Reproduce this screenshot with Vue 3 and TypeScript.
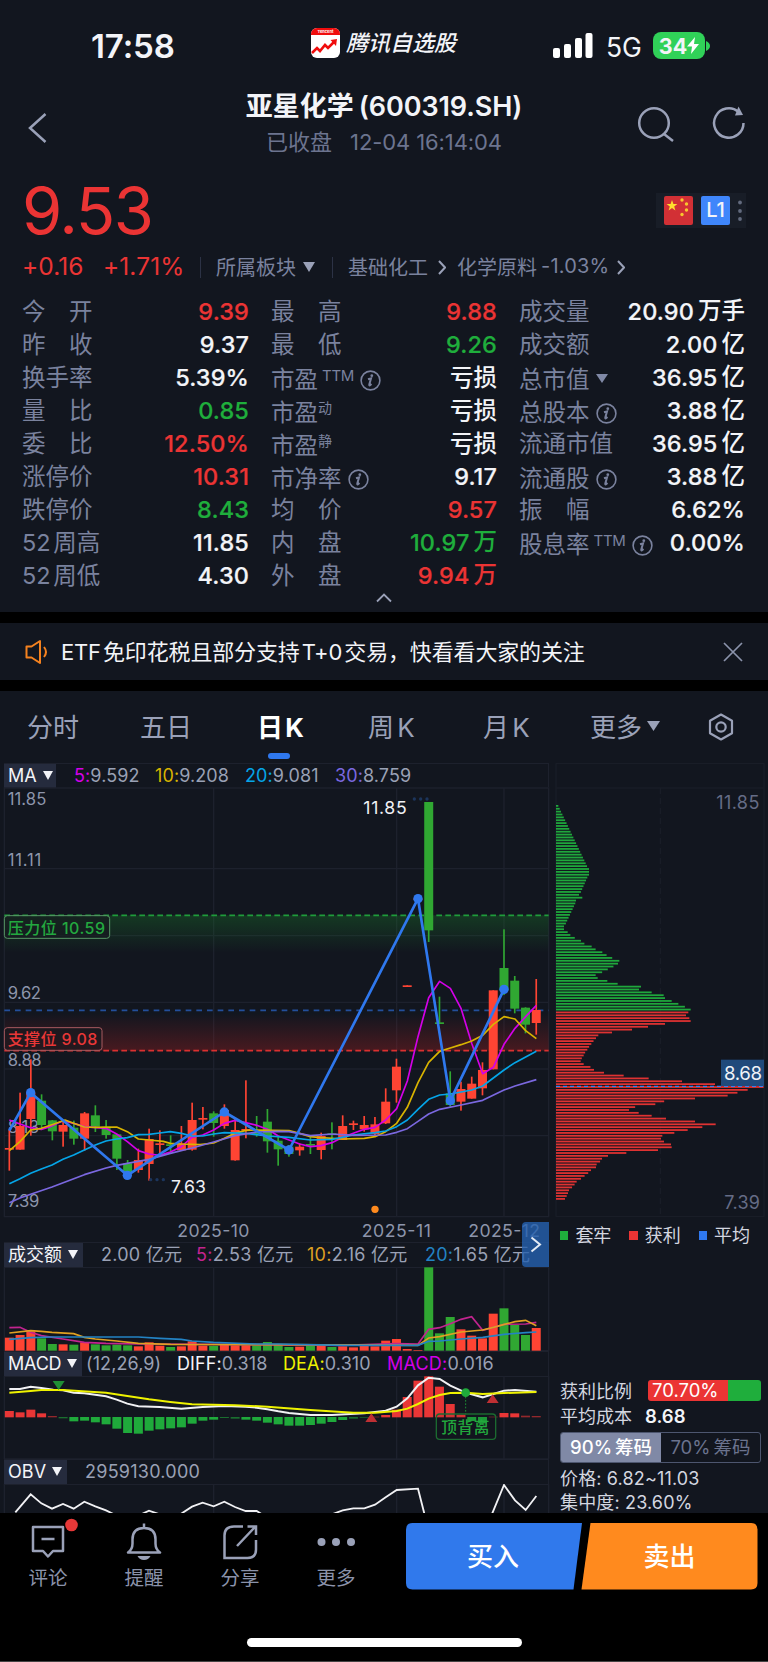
<script setup lang="ts">
interface Quote {
  label: string
  value: string
  unit?: string
  tone?: 'up' | 'down'
  sup?: string
  info?: boolean
  caret?: boolean
}

const columns: Quote[][] = [
  [
    { label: '今　开', value: '9.39', tone: 'up' },
    { label: '昨　收', value: '9.37' },
    { label: '换手率', value: '5.39%' },
    { label: '量　比', value: '0.85', tone: 'down' },
    { label: '委　比', value: '12.50%', tone: 'up' },
    { label: '涨停价', value: '10.31', tone: 'up' },
    { label: '跌停价', value: '8.43', tone: 'down' },
    { label: '52 周高', value: '11.85' },
    { label: '52 周低', value: '4.30' },
  ],
  [
    { label: '最　高', value: '9.88', tone: 'up' },
    { label: '最　低', value: '9.26', tone: 'down' },
    { label: '市盈', value: '', unit: '亏损', sup: 'TTM', info: true },
    { label: '市盈', value: '', unit: '亏损', sup: '动' },
    { label: '市盈', value: '', unit: '亏损', sup: '静' },
    { label: '市净率', value: '9.17', info: true },
    { label: '均　价', value: '9.57', tone: 'up' },
    { label: '内　盘', value: '10.97', unit: '万', tone: 'down' },
    { label: '外　盘', value: '9.94', unit: '万', tone: 'up' },
  ],
  [
    { label: '成交量', value: '20.90', unit: '万手' },
    { label: '成交额', value: '2.00', unit: '亿' },
    { label: '总市值', value: '36.95', unit: '亿', caret: true },
    { label: '总股本', value: '3.88', unit: '亿', info: true },
    { label: '流通市值', value: '36.95', unit: '亿' },
    { label: '流通股', value: '3.88', unit: '亿', info: true },
    { label: '振　幅', value: '6.62%' },
    { label: '股息率', value: '0.00%', sup: 'TTM', info: true },
  ],
]

const RED = '#ff4433'
const GREEN = '#30a732'
const cx = (i: number): number => 28 + 32.26 * i

// colour, high, body top, body bottom, low
type Candle = ['r' | 'g', number, number, number, number]
const candles: Candle[] = [
  ['r', 1050, 1104, 1107, 1172], ['r', 938, 1038, 1109, 1109], ['r', 838, 938, 1017, 1067],
  ['g', 943, 962, 1035, 1045], ['g', 1020, 1021, 1054, 1081], ['r', 1020, 1035, 1055, 1100],
  ['g', 1022, 1043, 1076, 1094], ['r', 996, 1000, 1076, 1112], ['g', 976, 1006, 1040, 1056],
  ['g', 1020, 1040, 1065, 1076], ['g', 1062, 1063, 1136, 1170], ['g', 1140, 1150, 1180, 1195],
  ['r', 1106, 1140, 1170, 1178], ['r', 1046, 1077, 1152, 1202], ['r', 1051, 1090, 1093, 1130],
  ['g', 1066, 1093, 1098, 1115], ['r', 1038, 1090, 1111, 1112], ['r', 968, 1020, 1109, 1112],
  ['r', 981, 1014, 1019, 1048], ['g', 994, 1000, 1029, 1070], ['r', 973, 990, 1038, 1046],
  ['r', 1015, 1050, 1141, 1142], ['r', 901, 1047, 1050, 1075], ['g', 1008, 1058, 1062, 1070],
  ['g', 987, 1025, 1084, 1118], ['g', 1070, 1082, 1108, 1157], ['g', 1095, 1100, 1122, 1130],
  ['r', 1090, 1100, 1111, 1127], ['g', 1068, 1092, 1096, 1122], ['r', 1058, 1068, 1110, 1138],
  ['g', 1027, 1060, 1064, 1108], ['r', 1006, 1038, 1080, 1080], ['r', 1022, 1030, 1035, 1050],
  ['r', 1008, 1035, 1048, 1055], ['r', 1011, 1033, 1062, 1070], ['r', 925, 965, 1030, 1032],
  ['r', 836, 860, 931, 968], ['r', 616, 616, 621, 621], ['r', 355, 355, 358, 358],
  ['g', 66, 66, 451, 486], ['g', 650, 727, 731, 732], ['g', 874, 940, 975, 980],
  ['r', 905, 927, 965, 992], ['r', 890, 911, 956, 956], ['r', 847, 870, 925, 946],
  ['r', 631, 631, 868, 868], ['g', 448, 564, 632, 645], ['g', 588, 602, 686, 700],
  ['g', 682, 683, 734, 760], ['r', 597, 690, 729, 764],
]

const volumeTops: number[] = [
  368, 360, 349, 370, 387, 388, 389, 382, 388, 391, 389, 391, 394, 382, 392, 396, 394, 379, 392, 393,
  389, 391, 391, 391, 381, 390, 396, 395, 392, 393, 396, 394, 397, 392, 394, 377, 372, 402, 405, 157,
  355, 306, 343, 362, 370, 296, 280, 330, 360, 339,
]

// positive rises above the zero line
const macdBars: number[] = [
  19, 15, 23, 12, 4, -4, -13, -11, -16, -22, -35, -48, -50, -41, -37, -34, -31, -20, -11, -8,
  -3, -5, -8, -11, -17, -22, -26, -26, -24, -20, -15, -9, -5, -2, 2, 7, 23, 61, 110, 123,
  92, 40, 8, -12, -19, 2, 13, 12, 5, 4,
]

const ma5 = '28,1020 60,1032 92,1043 124,1048 150,1040 189,1022 221,1030 253,1040 318,1045 350,1062 382,1085 415,1112 447,1122 479,1126 511,1116 544,1100 576,1072 608,1065 641,1050 673,1030 705,1021 737,1028 770,1036 802,1048 835,1068 867,1080 899,1092 931,1100 963,1097 996,1088 1028,1072 1060,1060 1093,1048 1125,1042 1157,1020 1190,986 1222,903 1254,770 1286,653 1319,604 1351,625 1383,685 1415,790 1448,881 1480,862 1512,793 1545,745 1577,710 1609,676'
const ma10 = '28,1112 60,1085 92,1050 124,1045 160,1033 195,1020 221,1030 253,1041 286,1042 350,1041 382,1055 415,1077 447,1080 490,1084 511,1090 544,1092 600,1094 641,1089 673,1075 705,1060 737,1051 770,1050 867,1052 899,1060 931,1070 963,1073 1028,1077 1093,1075 1125,1070 1157,1055 1190,1030 1222,982 1254,908 1286,847 1319,814 1351,804 1383,794 1415,783 1448,766 1480,733 1512,710 1545,717 1577,752 1609,776'
const ma20 = '28,1211 60,1196 92,1180 124,1167 156,1155 189,1138 221,1125 253,1110 286,1095 318,1083 350,1077 382,1073 415,1064 447,1063 479,1059 511,1055 544,1060 576,1068 608,1068 641,1062 673,1058 737,1060 802,1068 867,1072 931,1080 996,1078 1060,1065 1125,1058 1157,1053 1190,1040 1222,1020 1254,988 1286,958 1319,945 1351,942 1415,930 1448,918 1512,870 1545,848 1609,814'
const ma30 = '28,1268 60,1254 92,1243 156,1221 253,1184 318,1164 350,1156 382,1150 447,1138 511,1120 576,1104 641,1086 705,1067 770,1056 835,1054 867,1055 931,1067 996,1062 1060,1066 1157,1065 1190,1057 1222,1046 1254,1024 1286,1002 1319,988 1383,975 1448,961 1512,930 1545,918 1609,899'
const zigzag: [number, number][] = [[28, 1052], [92, 938], [382, 1186], [673, 996], [867, 1110], [1254, 356], [1351, 962], [1512, 628]]
const zigzagPoints = zigzag.map((p) => p.join(',')).join(' ')

const vol5 = '28,338 60,337 92,352 124,362 189,372 253,382 318,385 415,387 770,389 1028,391 1190,386 1254,387 1286,343 1319,338 1351,326 1383,313 1415,305 1448,346 1480,337 1512,328 1577,327 1609,322'
const vol10 = '28,354 92,347 124,349 156,352 221,356 253,367 286,372 350,378 415,385 512,388 835,389 1254,391 1286,369 1319,365 1383,351 1448,345 1480,337 1545,320 1577,316 1609,332'
const vol20 = '28,373 92,368 156,366 415,366 480,370 544,373 576,378 640,382 770,387 835,387 1028,391 1254,391 1286,379 1319,378 1383,372 1448,367 1512,358 1577,353 1609,351'
const diff = '28,522 60,522 92,515 124,519 160,524 189,526 221,533 253,535 318,544 350,554 382,566 415,574 479,576 544,581 608,576 673,573 737,575 770,578 802,583 835,589 867,594 931,600 996,600 1093,595 1157,587 1190,575 1222,550 1254,511 1286,488 1319,492 1351,512 1397,533 1448,547 1480,537 1512,527 1545,525 1609,530'
const dea = '28,533 92,528 124,525 189,525 318,533 382,543 447,553 511,561 576,568 705,571 802,575 931,585 1060,593 1125,593 1190,588 1222,581 1254,567 1286,551 1319,540 1351,534 1397,533 1448,537 1512,534 1609,531'
const obv = '46,892 92,838 124,865 156,881 189,867 221,881 253,860 286,874 318,886 350,902 415,902 447,887 479,898 530,905 576,875 608,863 641,874 673,860 705,876 737,888 770,888 802,908 996,898 1028,886 1060,880 1093,880 1125,869 1157,847 1190,825 1254,821 1272,892 1286,950 1455,950 1478,892 1512,810 1545,856 1577,885 1609,843'

// [y, right end] knots of the chip distribution outline
const knots: [number, number][] = [
  [78, 40], [95, 48], [271, 132], [282, 132], [349, 102], [357, 112], [366, 93], [443, 57], [452, 57],
  [460, 68], [486, 108], [502, 140], [519, 172], [545, 223], [553, 219], [587, 152], [596, 158], [604, 187],
  [612, 218], [621, 288], [630, 282], [638, 320], [647, 356], [655, 360], [663, 380], [688, 437], [697, 430],
  [705, 423], [714, 433], [723, 437], [731, 360], [740, 309], [748, 261], [757, 201], [765, 160], [774, 153],
  [808, 127], [825, 116], [842, 107], [850, 116], [867, 147], [875, 177], [884, 236], [892, 311], [901, 411],
  [909, 510], [917, 655], [925, 656], [934, 608], [943, 548], [952, 450], [960, 383], [969, 331], [977, 290],
  [986, 252], [994, 255], [1003, 281], [1011, 320], [1019, 363], [1028, 450], [1037, 512], [1045, 472],
  [1054, 428], [1063, 388], [1071, 352], [1080, 348], [1088, 357], [1097, 378], [1105, 380], [1113, 339],
  [1122, 244], [1130, 189], [1139, 171], [1156, 155], [1164, 153], [1173, 138], [1207, 95], [1233, 72], [1260, 60],
]
const chips = Array.from({ length: 138 }, (_, i) => {
  const y = 78 + i * 8.606
  const near = knots.find((n) => Math.abs(n[0] - y) < 4.3)
  const k = Math.min(Math.max(knots.findIndex((n) => n[0] > y), 1), knots.length - 1)
  const [a, b] = [knots[k - 1], knots[k]]
  const end = near ? near[1] : a[1] + ((b[1] - a[1]) * (y - a[0])) / (b[0] - a[0])
  return { y: y - 3, w: end - 33, fill: y < 692 ? '#1fa83c' : '#df3232' }
})

const axis = [
  { t: '11.85', y: 75, w: 116 }, { t: '11.11', y: 258, w: 101 }, { t: '9.62', y: 657, w: 100 },
  { t: '8.88', y: 857, w: 102 }, { t: '8.13', y: 1058, w: 94 }, { t: '7.39', y: 1280, w: 95 },
]
const months = [641, 1190, 1512]
</script>

<template>
  <div class="app">
    <section class="top">
      <div class="status">
        <b class="clock">17:58</b>
        <div class="brand">
          <svg width="29" height="30" viewBox="0 0 29 30"><rect width="29" height="30" rx="6" fill="#fff" /><path d="M0 7V6a6 6 0 0 1 6-6h17a6 6 0 0 1 6 6v1z" fill="#f00d0d" /><text x="14.500" y="5.200" font-size="4" font-weight="700" fill="#fff" text-anchor="middle">Tencent</text><path d="M1 25l5-5 3 3 5-6 3 3 7-7" fill="none" stroke="#f00d0d" stroke-width="2.600" /><path d="M19.500 12l6.500-1-1 7z" fill="#f00d0d" /></svg>
          <i>腾讯自选股</i>
        </div>
        <svg class="signal" width="40" height="26" viewBox="0 0 40 26" fill="#fff"><rect y="15" width="7" height="10" rx="2" /><rect x="11" y="11" width="7" height="14" rx="2" /><rect x="22" y="5" width="7" height="20" rx="2" /><rect x="32.500" width="7" height="25" rx="2" /></svg>
        <span class="net">5G</span>
        <div class="battery"><b>34</b><svg width="12" height="17" viewBox="0 0 12 17"><path d="M8 0L0 9.500h5L4 17l8-10H7z" fill="#fff" /></svg></div>
        <svg class="knob" width="4" height="10" viewBox="0 0 4 10"><path d="M0 0q4 2 4 5t-4 5z" fill="#30d158" /></svg>
      </div>

      <div class="nav">
        <svg class="back" width="20" height="32" viewBox="0 0 20 32"><path d="M17.500 2L2 16l15.500 14" fill="none" stroke="#9aa1b8" stroke-width="2.500" /></svg>
        <div class="title">
          <h1>亚星化学<span>(600319.SH)</span></h1>
          <p>已收盘<span>12-04 16:14:04</span></p>
        </div>
        <svg class="search" width="38" height="38" viewBox="0 0 38 38" fill="none" stroke="#9aa1b8" stroke-width="2.500"><circle cx="17" cy="18" r="14.800" /><path d="M27 29l9 7" /></svg>
        <svg class="reload" width="36" height="38" viewBox="0 0 36 38" fill="none" stroke="#9aa1b8" stroke-width="2.500"><path d="M32.500 18A14.700 14.700 0 1 1 27.500 7" /><path d="M27.500 1.500L32 10l-8 .500z" fill="#9aa1b8" stroke="none" /></svg>
      </div>

      <div class="price-row">
        <span class="price">9.53</span>
        <div class="tags">
          <svg width="29" height="29" viewBox="0 0 29 29"><rect width="29" height="29" rx="2" fill="#d23035" /><path d="M8 4l1.400 4h4l-3.200 2.500 1.200 4L8 12l-3.400 2.500 1.200-4L2.600 8h4z" fill="#ffde2e" /><g fill="#f9c62e"><circle cx="18" cy="4" r="1.700" /><circle cx="22.500" cy="8" r="1.700" /><circle cx="22.500" cy="14" r="1.700" /><circle cx="18" cy="18.500" r="1.700" /></g></svg>
          <b>L1</b>
          <svg width="4" height="22" viewBox="0 0 4 22" fill="#626a7e"><circle cx="2" cy="2.500" r="1.900" /><circle cx="2" cy="11" r="1.900" /><circle cx="2" cy="19" r="1.900" /></svg>
        </div>
      </div>

      <div class="change">
        <span class="amt">+0.16</span><span class="pct">+1.71%</span><i class="bar" />
        <span class="sector">所属板块</span><svg width="12" height="10" viewBox="0 0 12 10"><path d="M0 0h12L6 10z" fill="#9aa1b8" /></svg><i class="bar bar2" />
        <span class="base">基础化工</span><svg width="8" height="15" viewBox="0 0 8 15"><path d="M1 1l6 6.500L1 14" fill="none" stroke="#9aa1b8" stroke-width="2" /></svg>
        <span class="mat">化学原料</span><span class="drop">-1.03%</span><svg width="8" height="15" viewBox="0 0 8 15"><path d="M1 1l6 6.500L1 14" fill="none" stroke="#9aa1b8" stroke-width="2" /></svg>
      </div>

      <div class="quotes">
        <div v-for="(col, c) in columns" :key="c" class="col">
          <div v-for="(q, r) in col" :key="r" class="cell">
            <span class="label" :class="{ low: q.sup || q.info || q.caret }">{{ q.label }}<sup v-if="q.sup" :class="{ ttm: q.sup === 'TTM' }">{{ q.sup }}</sup><svg v-if="q.info" class="info" width="21" height="21" viewBox="0 0 21 21"><circle cx="10.500" cy="10.500" r="9.400" fill="none" stroke="#7a829e" stroke-width="1.600" /><path d="M8 9.300l3-.900-1.700 6.200q-.200 1 .500.700l1.700-1.400" fill="none" stroke="#7a829e" stroke-width="2" /><circle cx="11.800" cy="5.700" r="1.400" fill="#7a829e" /></svg><svg v-if="q.caret" class="caret" width="12" height="9" viewBox="0 0 12 9"><path d="M0 0h12L6 9z" fill="#8089a6" /></svg></span>
            <span class="value" :class="q.tone">{{ q.value }}<em v-if="q.unit">{{ q.unit }}</em></span>
          </div>
        </div>
      </div>
      <svg class="fold" width="16" height="10" viewBox="0 0 16 10"><path d="M1 8.500L8 1.500l7 7" fill="none" stroke="#9aa1b8" stroke-width="1.800" /></svg>
    </section>

    <section class="notice">
      <svg width="24" height="26" viewBox="0 0 24 26" fill="none" stroke="#f5821f" stroke-width="2"><path d="M1.500 7.500h5L15 2v22l-8.500-5.500h-5z" stroke-linejoin="round" /><path d="M19 8q4 5 0 10" /></svg>
      <span>ETF 免印花税且部分支持 T+0 交易，快看看大家的关注</span>
      <svg class="close" width="20" height="20" viewBox="0 0 20 20"><path d="M1 1l18 18M19 1L1 19" stroke="#8b93ab" stroke-width="1.700" /></svg>
    </section>

    <section class="chart">
      <div class="tabs">
        <span>分时</span><span>五日</span><span class="on">日 K</span><span>周 K</span><span>月 K</span>
        <span>更多<svg width="13" height="10" viewBox="0 0 13 10"><path d="M0 0h13L6.500 10z" fill="#9aa1b8" /></svg></span>
        <svg class="gear" width="26" height="28" viewBox="0 0 26 28" fill="none" stroke="#9aa1b8" stroke-width="2.200"><path d="M13 1.500l11 6.300v12.400l-11 6.300-11-6.300V7.800z" stroke-linejoin="round" /><circle cx="13" cy="14" r="4.700" /></svg>
      </div>

      <div class="panels">
        <div class="main">
          <div class="head ma">
            <span class="pick">MA<i class="tri" /></span>
            <span class="v1"><em class="mag">5:</em>9.592</span><span class="v2"><em class="yel">10:</em>9.208</span><span class="v3"><em class="cya">20:</em>9.081</span><span class="v4"><em class="pur">30:</em>8.759</span>
          </div>

          <svg width="553" height="455" viewBox="0 21 1659 1365">
            <defs>
              <linearGradient id="gUp" x1="0" y1="0" x2="0" y2="1"><stop offset="0" stop-color="#1b8a2c" stop-opacity=".3" /><stop offset="1" stop-color="#1b8a2c" stop-opacity="0" /></linearGradient>
              <linearGradient id="gLow" x1="0" y1="0" x2="0" y2="1"><stop offset="0" stop-color="#b02020" stop-opacity="0" /><stop offset="1" stop-color="#b02020" stop-opacity=".34" /></linearGradient>
            </defs>
            <g stroke="#1d212d" stroke-width="4" fill="none">
              <path d="M13 24H1646V1310H13zM13 266H1646M13 467H1646M13 667H1646M13 867H1646M13 1067H1646" />
              <path v-for="m in months" :key="m" :d="`M${m} 24V1310`" />
            </g>
            <rect x="13" y="406" width="1633" height="112" fill="url(#gUp)" />
            <rect x="13" y="700" width="1633" height="112" fill="url(#gLow)" />
            <g stroke-width="5" stroke-dasharray="17 10">
              <path d="M13 406H1646" stroke="#1f9c3b" /><path d="M13 812H1646" stroke="#da3030" />
            </g>
            <path d="M13 691H1646" stroke="#234f9b" stroke-width="5" stroke-dasharray="17 15" />
            <g font-size="50" fill="#8d95ab">
              <text v-for="a in axis" :key="a.t" x="23" :y="a.y" :textLength="a.w">{{ a.t }}</text>
            </g>
            <g v-for="(c, i) in candles" :key="i" :fill="c[0] === 'r' ? RED : GREEN">
              <rect :x="cx(i) - 2.5" :y="c[1]" width="5" :height="c[4] - c[1]" />
              <rect :x="cx(i) - 13.5" :y="c[2]" width="27" :height="Math.max(c[3] - c[2], 5)" />
            </g>
            <g fill="none" stroke-width="5" stroke-linejoin="round">
              <polyline :points="ma5" stroke="#d400e8" /><polyline :points="ma10" stroke="#d9b400" />
              <polyline :points="ma20" stroke="#05a5e8" /><polyline :points="ma30" stroke="#7b68e0" />
              <polyline :points="zigzagPoints" stroke="#2f78ee" stroke-width="8" />
            </g>
            <circle v-for="p in zigzag.slice(1)" :key="p[0]" :cx="p[0]" :cy="p[1]" r="14" fill="#2f78ee" />
            <circle cx="1125" cy="1288" r="11" fill="#ff8a1e" />
            <g fill="#1c355c"><circle v-for="x in [1243, 1262, 1281]" :key="x" :cx="x" cy="57" r="5" /><circle v-for="x in [452, 471, 490]" :key="x" :cx="x" cy="1199" r="5" /></g>
            <g fill="#15181f" fill-opacity=".65" stroke-width="3"><rect x="13" y="407" width="316" height="68" rx="9" stroke="#579766" /><rect x="13" y="743" width="293" height="68" rx="9" stroke="#a85a60" /></g>
            <g font-size="48" font-weight="500"><text x="23" y="461" textLength="292" fill="#23a83f">压力位 10.59</text><text x="23" y="796" textLength="269" fill="#e83737">支撑位 9.08</text></g>
            <g font-size="53" fill="#f0f1f5"><text x="1090" y="103" textLength="130">11.85</text><text x="513" y="1239" textLength="105">7.63</text></g>
            <g font-size="53" fill="#8d95ab"><text x="532" y="1370" textLength="216">2025-10</text><text x="1085" y="1370" textLength="208">2025-11</text><text x="1405" y="1370" textLength="215">2025-12</text></g>
          </svg>

          <div class="head vol">
            <span class="pick">成交额<i class="tri" /></span>
            <span class="v1">2.00 亿元</span><span class="v2"><em class="pin">5:</em>2.53 亿元</span><span class="v3"><em class="ora">10:</em>2.16 亿元</span><span class="v4"><em class="blu">20:</em>1.65 亿元</span>
          </div>
          <svg width="553" height="84" viewBox="0 156 1659 252">
            <path d="M13 157H1646V407H13z" fill="none" stroke="#1d212d" stroke-width="4" />
            <path v-for="m in months" :key="m" :d="`M${m} 157V407`" stroke="#1d212d" stroke-width="4" />
            <rect v-for="(v, i) in volumeTops" :key="i" :x="cx(i) - 13.5" :y="v" width="27" :height="407 - v" :fill="candles[i][0] === 'r' ? RED : GREEN" />
            <g fill="none" stroke-width="5"><polyline :points="vol5" stroke="#c2248f" /><polyline :points="vol10" stroke="#dfa022" /><polyline :points="vol20" stroke="#2383c4" /></g>
          </svg>

          <div class="head macd">
            <span class="pick">MACD<i class="tri" /></span>
            <span class="v1">(12,26,9)</span><span class="v2"><em class="whi">DIFF:</em>0.318</span><span class="v3"><em class="lem">DEA:</em>0.310</span><span class="v4"><em class="mag">MACD:</em>0.016</span>
          </div>
          <svg width="553" height="83" viewBox="0 483 1659 249">
            <path d="M13 484H1646V732H13z" fill="none" stroke="#1d212d" stroke-width="4" />
            <path v-for="m in months" :key="m" :d="`M${m} 484V732`" stroke="#1d212d" stroke-width="4" />
            <rect v-for="(v, i) in macdBars" :key="i" :x="cx(i) - 13.5" :y="v > 0 ? 607 - v : 606" width="27" :height="Math.abs(v)" :fill="v > 0 ? '#e93636' : '#1faa3b'" :opacity="Math.abs(v) < 6 ? 0.6 : 1" />
            <g fill="none" stroke-width="6"><polyline :points="diff" stroke="#f1f1f4" /><polyline :points="dea" stroke="#eef200" /></g>
            <path d="M158 498h36l-18 27z" fill="#1f8f35" /><path d="M1096 621h36l-18-26zM1460 564h36l-18-26z" fill="#bf2f33" />
            <path d="M1397 545V597" stroke="#1f8f35" stroke-width="3" stroke-dasharray="5 5" /><ellipse cx="1397" cy="533" rx="13" ry="13" fill="#1faa3b" />
            <rect x="1309" y="597" width="178" height="76" rx="10" fill="#12161f" fill-opacity=".1" stroke="#1b6a30" stroke-width="4" />
            <text x="1324" y="653" font-size="47" textLength="144" font-weight="500" fill="#22a83d">顶背离</text>
          </svg>

          <div class="head obv"><span class="pick">OBV<i class="tri" /></span><span class="v1">2959130.000</span></div>
          <svg width="553" height="29" viewBox="0 807 1659 87">
            <path d="M13 920V808H1646V920M641 808V920M1190 808V920M1512 808V920" fill="none" stroke="#1d212d" stroke-width="4" />
            <polyline :points="obv" fill="none" stroke="#f1f1f4" stroke-width="5.500" />
          </svg>
          <div class="next"><svg width="12" height="17" viewBox="0 0 12 17"><path d="M1.500 1.500l8.500 7-8.500 7" fill="none" stroke="#e4ebf5" stroke-width="2" /></svg></div>
        </div>

        <div class="side">
          <svg width="215" height="454" viewBox="24 -51 645 1362">
            <path d="M33 -50V1310M33 -50H657M33 24H657M657 -50V1310M33 1310H657" fill="none" stroke="#191d27" stroke-width="4" />
            <path d="M346 24V1310" stroke="#191d27" stroke-width="4" stroke-dasharray="18 12" />
            <rect v-for="(b, i) in chips" :key="i" x="33" :y="b.y" :width="b.w" height="5.300" :fill="b.fill" />
            <path d="M33 919H657" stroke="#3b7ff0" stroke-width="4" stroke-dasharray="12 9" />
            <rect x="528" y="839" width="129" height="79" fill="#204a7b" />
            <g font-size="54"><text x="514" y="86" textLength="129" fill="#656c86">11.85</text><text x="538" y="1287" textLength="107" fill="#656c86">7.39</text></g>
            <text x="537" y="901" font-size="56" textLength="114" fill="#f0f3f8">8.68</text>
          </svg>
          <div class="legend"><i class="g" /><span>套牢</span><i class="r" /><span>获利</span><i class="b" /><span>平均</span></div>
          <div class="stat"><span>获利比例</span><div class="ratio">70.70%</div></div>
          <div class="stat cost"><span>平均成本</span><b>8.68</b></div>
          <div class="switch"><b>90% 筹码</b><span>70% 筹码</span></div>
          <div class="line l1">价格: 6.82~11.03</div>
          <div class="line l2">集中度: 23.60%</div>
        </div>
      </div>
    </section>

    <footer>
      <div class="actions">
        <div class="act">
          <svg width="48" height="44" viewBox="0 0 48 44" fill="none" stroke="#9aa1b8" stroke-width="2.500"><path d="M9 10h30v24h-10l-5 5.500-5-5.500H9z" stroke-linejoin="round" /><path d="M17.500 22h13" /><circle cx="47.500" cy="8" r="6.300" fill="#e73838" stroke="none" /></svg>
          <span>评论</span>
        </div>
        <div class="act">
          <svg width="48" height="44" viewBox="0 0 48 44" fill="none" stroke="#9aa1b8" stroke-width="2.500"><path d="M24 6.500v4M8 35.500q4.500-3 4.500-9v-4q0-11.500 11.500-11.500t11.500 11.500v4q0 6 4.500 9z" stroke-linejoin="round" /><path d="M17.500 39h13q-2 4-6.500 4t-6.500-4z" fill="#9aa1b8" stroke="none" /></svg>
          <span>提醒</span>
        </div>
        <div class="act">
          <svg width="48" height="44" viewBox="0 0 48 44" fill="none" stroke="#9aa1b8" stroke-width="2.500"><path d="M27 9.500H18q-9.500 0-9.500 9v22.500h23q8.500 0 8.500-8.500V23" /><path d="M21 29L39 10M31.500 9.500H40V18" /></svg>
          <span>分享</span>
        </div>
        <div class="act">
          <svg width="48" height="44" viewBox="0 0 48 44" fill="#9aa1b8"><circle cx="9.500" cy="25" r="4" /><circle cx="24" cy="25" r="4" /><circle cx="39" cy="25" r="4" /></svg>
          <span>更多</span>
        </div>
        <div class="trade">
          <svg width="352" height="67" viewBox="0 0 352 67"><path d="M6.500 0H176l-8.500 66.500H6.500Q0 66.500 0 60V6.500Q0 0 6.500 0z" fill="#3079ec" /><path d="M184.500 0H345q6.500 0 6.500 6.500V60q0 6.500-6.500 6.500H175.500z" fill="#ff8a1e" /><g font-size="26" font-weight="500" fill="#fff"><text x="61" y="43">买入</text><text x="237.500" y="43">卖出</text></g></svg>
        </div>
      </div>
      <div class="home" />
    </footer>
  </div>
</template>

<style>
html,
body {
  background: #000;
}
</style>

<style scoped>
.app {
  width: 768px;
  height: 1662px;
  overflow: hidden;
  background: #000;
  color: #f3f4f8;
  font-family: Inter, "Noto Sans CJK SC", sans-serif;
  white-space: nowrap;
}
.app * { box-sizing: border-box; }
svg { display: block; flex: none; }
svg text { font-family: Inter, "Noto Sans CJK SC", sans-serif; }
em, i { font-style: normal; }
.top { height: 612px; background: #12161f; }
.status { display: flex; height: 91px; align-items: center; }
.clock { width: 220px; margin-left: 91px; font-size: 33px; font-weight: 600; letter-spacing: -0.1px; }
.brand { display: flex; align-items: center; gap: 6px; width: 242px; margin-top: -6px; }
.brand i { margin-top: -4px; font-size: 22px; font-weight: 500; font-style: italic; }
.net { width: 47px; margin-left: 13px; margin-top: 2px; font-size: 26.500px; }
.battery { display: flex; align-items: center; justify-content: center; width: 52px; height: 27px; border-radius: 8px; background: #30d158; font-size: 21.500px; }
.knob { margin-left: 1px; }
.nav { display: flex; height: 77px; align-items: flex-start; }
.back { margin: 21px 0 0 28px; }
.title { width: 500px; margin-left: 86px; text-align: center; }
.title h1 { height: 32px; margin: 0; font-size: 27px; line-height: 32px; font-weight: 600; }
.title h1 span { margin-left: 5px; letter-spacing: -0.1px; }
.title p { height: 30px; margin: 4px 0 0; font-size: 22px; line-height: 30px; color: #6c748f; }
.title p span { margin-left: 18px; font-size: 22px; letter-spacing: -0.1px; }
.search { margin: 14px 0 0 3px; }
.reload { margin: 14px 0 0 36px; }
.price-row { display: flex; height: 80px; justify-content: space-between; padding: 0 22px 0 22px; }
.price { font-size: 65px; line-height: 86px; letter-spacing: -1.400px; color: #eb3434; }
.tags { display: flex; align-items: center; gap: 8px; width: 90px; height: 35px; margin-top: 25px; padding-left: 8px; background: #181d27; }
.tags b { width: 29px; height: 29px; border-radius: 2px; background: #3f86fb; font-size: 20px; line-height: 29px; font-weight: 500; text-align: center; }
.change { display: flex; height: 38px; align-items: center; padding-left: 22px; font-size: 20px; color: #7a829e; }
.change span { margin-top: -2px; }
.amt, .pct { width: 81px; font-size: 24.500px; letter-spacing: 0.1px; color: #eb3434; }
.pct { width: 97px; }
.bar { width: 1px; height: 21px; background: #2c3245; }
.change .sector { width: 87px; margin-left: 15px; }
.bar2 { margin: 0 15px 0 17px; }
.base { width: 90px; }
.change .mat { width: 84px; margin-left: 11px; }
.drop { width: 76px; letter-spacing: 0.2px; }
.quotes { display: grid; grid-template-columns: 227px 226px 226px; column-gap: 22px; height: 297px; margin: 9px 0 0 22px; }
.cell { display: flex; height: 33px; align-items: center; justify-content: space-between; line-height: 33px; }
.label { display: flex; align-items: center; height: 33px; margin-top: -1px; font-size: 23.500px; color: #7a829e; white-space: pre; word-spacing: -4px; }
.low { padding-top: 4px; }
sup { align-self: flex-start; margin: 0 0 0 0; font-size: 14px; line-height: 20px; }
sup.ttm { margin: 1px 0 0 4px; font-size: 15px; letter-spacing: -0.3px; }
.info { margin: 2px 0 0 6px; }
.caret { margin: -1px 0 0 6px; }
.value { display: flex; font-size: 23.500px; font-weight: 500; letter-spacing: 0.1px; -webkit-text-stroke: 0.200px currentColor; }
.value em { margin: -1px 0 0 4px; font-weight: 500; letter-spacing: 0; -webkit-text-stroke: 0; }
.up { color: #eb3434; }
.down { color: #1fae3c; }
.fold { margin: 1px auto 0; }
.notice { display: flex; height: 57px; align-items: center; margin-top: 11px; padding: 0 25px 0 25px; background: #12161f; }
.notice span { margin: -4px 0 0 12px; font-size: 22px; letter-spacing: -0.150px; word-spacing: -4px; }
.close { margin-left: auto; }
.chart { height: 822px; margin-top: 11px; background: #12161f; overflow: hidden; }
.tabs { display: grid; grid-template-columns: 113px 117px 111px 115px 107px 117px 60px; height: 72px; padding-left: 27px; align-items: center; font-size: 26px; color: #9aa1b8; }
.tabs span { position: relative; display: flex; align-items: center; gap: 5px; margin-top: -3px; word-spacing: -4px; }
.tabs .on { font-weight: 700; color: #fff; }
.tabs .on::after { content: ""; position: absolute; left: 11px; bottom: -15px; width: 22px; height: 6px; border-radius: 3px; background: #2f78ee; }
.gear { margin-left: 1px; }
.panels { display: grid; grid-template-columns: 553px 215px; }
.main { position: relative; }
.head { display: flex; height: 25px; align-items: center; margin: 0 4px; border: solid #1d212d; border-width: 1px 1px 0 1px; font-size: 18px; letter-spacing: 0.1px; color: #9aa1b5; }
.head > span { line-height: 23px; padding-bottom: 1px; }
.head.ma { height: 24px; }
.head .pick { display: flex; flex: none; align-items: center; gap: 6px; height: 24px; margin-left: -1px; padding: 0 0 1px 4px; background: #252b3d; color: #f3f4f8; }
.tri { border: 5.500px solid transparent; border-top: 9px solid #f3f4f8; border-bottom: 0; }
.ma .pick { width: 52px; }
.ma .v1 { width: 81px; margin-left: 18px; }
.ma .v2 { width: 90px; }
.ma .v3 { width: 90px; }
.vol { letter-spacing: 0.25px; }
.vol .pick { width: 79px; letter-spacing: 0; }
.vol .v1 { width: 95px; margin-left: 18px; }
.vol .v2 { width: 111px; }
.vol .v3 { width: 118px; }
.macd .pick { width: 78px; letter-spacing: -0.2px; }
.macd .v1 { width: 91px; margin-left: 4px; }
.macd .v2 { width: 106px; }
.macd .v3 { width: 104px; }
.macd .v4 { letter-spacing: 0.2px; }
.obv .pick { width: 63px; }
.obv .v1 { margin-left: 18px; letter-spacing: 0.25px; }
.mag { color: #d400e8; }
.yel { color: #d9b400; }
.cya { color: #05a5e8; }
.pur { color: #7b68e0; }
.pin { color: #c2248f; }
.ora { color: #dfa022; }
.blu { color: #2383c4; }
.whi { color: #f3f4f8; }
.lem { color: #eef200; }
.next { position: absolute; left: 522px; top: 459px; display: flex; align-items: center; justify-content: center; width: 27px; height: 45px; border-radius: 4px 0 0 4px; background: rgba(38, 98, 176, 0.8); }
.legend { display: flex; height: 36px; align-items: center; padding-left: 7px; font-size: 18px; color: #d4d7e0; }
.legend i { width: 9px; height: 9px; margin-right: 7px; }
.legend span { width: 58px; margin-top: -2px; }
.g { background: #1fae3c; }
.r { background: #eb3434; }
.b { background: #2f78ee; }
.stat { display: flex; align-items: center; height: 25px; margin: 125px 0 0 7px; font-size: 18px; color: #d4d7e0; }
.stat span { margin-top: -2px; }
.ratio { width: 113px; height: 21px; margin-left: 16px; padding-left: 4px; border-radius: 3px; background: linear-gradient(90deg, #eb3434 80px, #1fae3c 80px); color: #fff; line-height: 21px; font-size: 18.500px; }
.cost { margin-top: 0; }
.cost b { margin-left: 13px; font-weight: 600; font-size: 18.500px; color: #f3f4f8; }
.switch { display: flex; width: 201px; height: 31px; margin: 4px 0 0 7px; border: 1px solid #4d566f; border-radius: 3px; font-size: 18.500px; line-height: 28px; text-align: center; word-spacing: -2px; color: #6b738e; overflow: hidden; }
.switch b { width: 100px; background: #8089a6; color: #fff; font-weight: 500; }
.switch span { flex: 1; }
.line { height: 24px; margin-left: 7px; font-size: 18px; letter-spacing: 0.15px; line-height: 24px; color: #d4d7e0; }
.l1 { margin-top: 4px; }
.l2 { height: 21px; margin-top: 1px; line-height: 21px; }
footer { height: 149px; border-bottom: 1px solid #444; }
.actions { display: flex; height: 125px; align-items: flex-start; }
.act { width: 96px; display: flex; flex-direction: column; align-items: center; padding-top: 4px; font-size: 19.500px; line-height: 30px; color: #8b93ab; }
.act svg { overflow: visible; }
.act span { margin-top: 2px; }
.trade { margin: 10px 0 0 22px; }
.home { width: 275px; height: 9px; margin: 0 auto; border-radius: 5px; background: #fff; }
</style>
